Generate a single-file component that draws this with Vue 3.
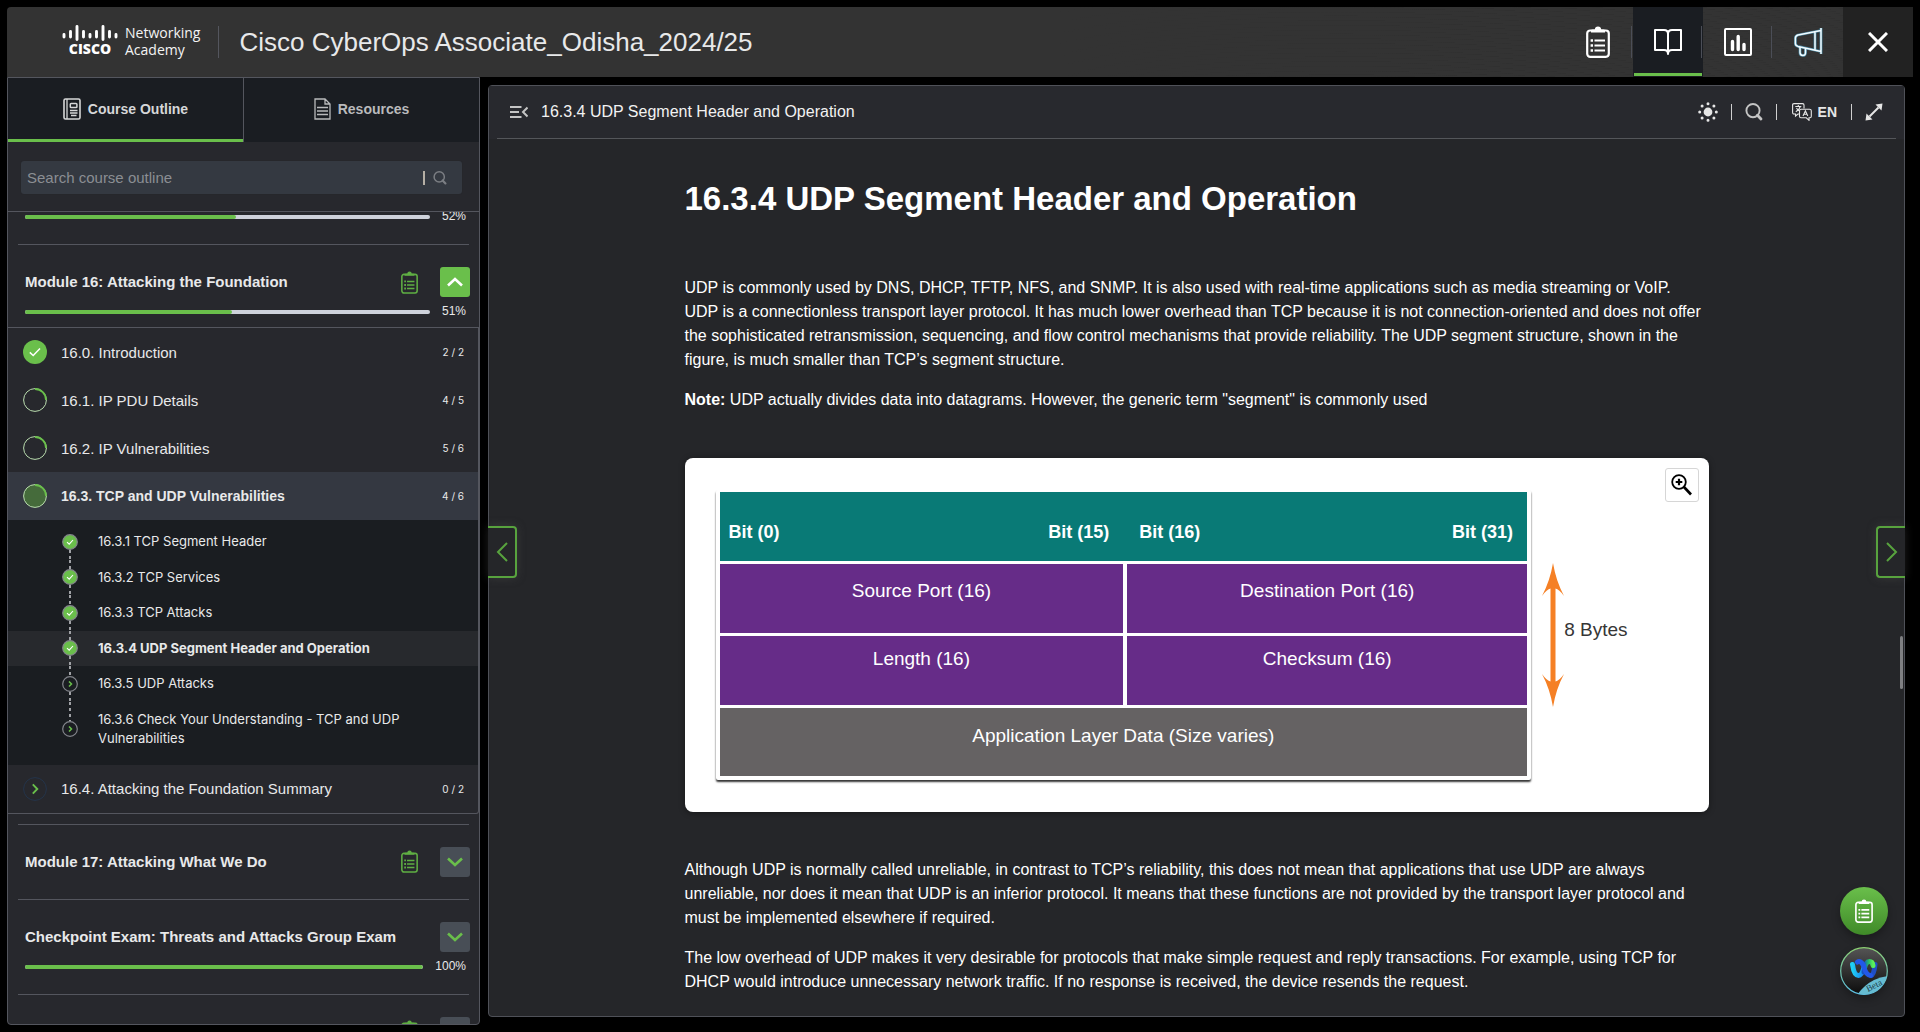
<script setup>
import { ref } from 'vue'

const query = ref('')

const sections = [
  { title: '16.0. Introduction', count: '2 / 2', state: 'done' },
  { title: '16.1. IP PDU Details', count: '4 / 5', state: 'partial' },
  { title: '16.2. IP Vulnerabilities', count: '5 / 6', state: 'partial' },
  {
    title: '16.3. TCP and UDP Vulnerabilities',
    count: '4 / 6',
    state: 'partial',
    open: true,
    topics: [
      { title: '16.3.1 TCP Segment Header', done: true },
      { title: '16.3.2 TCP Services', done: true },
      { title: '16.3.3 TCP Attacks', done: true },
      { title: '16.3.4 UDP Segment Header and Operation', done: true, current: true },
      { title: '16.3.5 UDP Attacks', done: false },
      { title: '16.3.6 Check Your Understanding - TCP and UDP Vulnerabilities', done: false },
    ],
  },
  { title: '16.4. Attacking the Foundation Summary', count: '0 / 2', state: 'new' },
]

const modules = [
  { id: 'm15', percent: 52 },
  { id: 'm16', title: 'Module 16: Attacking the Foundation', exam: true, percent: 51, sections },
  { id: 'm17', title: 'Module 17: Attacking What We Do', exam: true },
  { id: 'cp', title: 'Checkpoint Exam: Threats and Attacks Group Exam', percent: 100 },
  { id: 'm18', title: '', exam: true },
]
</script>

<template>
  <div class="app">
    <svg class="defs" width="0" height="0" aria-hidden="true">
      <symbol id="i-clipboard" viewBox="0 0 24 32">
        <rect x="1.200" y="4.5" width="21.600" height="26.300" rx="3" fill="none" stroke="currentColor" stroke-width="2.200" />
        <path d="M5 6.5V4.5Q5 3.5 6.5 3.5H8.8Q9 .5 12 .5T15.2 3.5H17.5Q19 3.5 19 4.5V6.5Z" fill="currentColor" />
        <path d="M8.5 14.5H19M8.5 19.5H19M8.5 24.5H19" stroke="currentColor" stroke-width="2.200" />
        <path d="M4.6 14.5h2.4M4.6 19.5h2.4M4.6 24.5h2.4" stroke="currentColor" stroke-width="2.6" />
      </symbol>
      <symbol id="i-search" viewBox="0 0 18 18">
        <circle cx="8" cy="7.6" r="6.6" fill="none" stroke="currentColor" stroke-width="1.9" />
        <path d="M12.4 12.2L16 16" stroke="currentColor" stroke-width="2.8" stroke-linecap="round" />
      </symbol>
    </svg>

    <header class="topbar">
      <a class="logo" href="#" aria-label="Cisco Networking Academy">
        <span class="logo-mark">
          <svg width="56" height="16" viewBox="0 0 56 16" aria-hidden="true">
            <path d="M2 9.500v2.500M8.500 6.500v5.500M15 1.500v13M21.500 6.500v5.500M28 9.500v2.500M34.500 6.500v5.500M41 1.500v13M47.500 6.500v5.500M54 9.500v2.500"
              stroke="#fff" stroke-width="2.900" stroke-linecap="round" />
          </svg>
          <span class="logo-name">CISCO</span>
        </span>
        <span class="logo-text">Networking<br>Academy</span>
      </a>
      <span class="vline"></span>
      <div class="course">Cisco CyberOps Associate_Odisha_2024/25</div>
      <nav class="tools">
        <button type="button" aria-label="Assignments">
          <svg width="24" height="32"><use href="#i-clipboard" /></svg>
        </button>
        <button type="button" class="active" aria-label="Course content">
          <svg width="28" height="26" viewBox="0 0 28 26" fill="none" stroke="currentColor" stroke-width="2" stroke-linejoin="round">
            <path d="M1 1H10Q14 1 14 5Q14 1 18 1H27V21H18Q14 21 14 25Q14 21 10 21H1ZM14 5V24" />
          </svg>
        </button>
        <button type="button" aria-label="Grades">
          <svg width="28" height="28" viewBox="0 0 28 28" fill="none" stroke="currentColor" stroke-width="2">
            <rect x="1" y="1" width="26" height="26" rx="1" />
            <path d="M8.500 13.500V21.500M14.200 8.500V21.500M20 16.500V21.500" stroke-width="3.400" stroke-linecap="round" />
          </svg>
        </button>
        <button type="button" class="plain" aria-label="Announcements">
          <svg width="29" height="30" viewBox="0 0 29 30" fill="none" stroke-linejoin="round">
            <g stroke="#4a89a3" stroke-width="2.800">
              <path d="M27 1V27M27 3.500L4 8Q1.400 8.800 1.400 11V16.500Q1.400 18.700 4 19.400L27 24.500M21 4.700V23.200" />
              <path d="M6 20V25.500Q6 28.400 8.800 28.400T11.500 25.500V21" />
            </g>
            <g stroke="#f2fbff" stroke-width="1.500">
              <path d="M27 1V27M27 3.500L4 8Q1.400 8.800 1.400 11V16.500Q1.400 18.700 4 19.400L27 24.500M21 4.700V23.200" />
              <path d="M6 20V25.500Q6 28.400 8.800 28.400T11.500 25.500V21" />
            </g>
          </svg>
        </button>
        <button type="button" class="close" aria-label="Close">
          <svg width="20" height="20" viewBox="0 0 20 20" stroke="currentColor" stroke-width="3">
            <path d="M1 1L19 19M19 1L1 19" />
          </svg>
        </button>
      </nav>
    </header>

    <div class="body">
      <aside class="sidebar">
        <div class="tabs" role="tablist">
          <button type="button" role="tab" aria-selected="true" class="tab selected">
            <svg width="18" height="22" viewBox="0 0 18 22" fill="none" stroke="currentColor" stroke-width="1.300">
              <rect x="1" y="1" width="16" height="20" rx="1.500" stroke-width="1.600" />
              <path d="M4 1V21M7 12.500H14.500M7 15H14.500M8 17.500H13.500" />
              <rect x="7.300" y="5.500" width="6.600" height="4" rx=".8" stroke-width="1.500" />
            </svg>
            Course Outline
          </button>
          <button type="button" role="tab" aria-selected="false" class="tab">
            <svg width="17" height="22" viewBox="0 0 17 22" fill="none" stroke="currentColor" stroke-width="1.300">
              <path d="M1 1H11L16 6V21H1ZM11 1V6H16M3 9.500H14M3 13H14M3 16.500H14" />
            </svg>
            Resources
          </button>
        </div>

        <form class="search" @submit.prevent>
          <input v-model="query" type="text" placeholder="Search course outline" aria-label="Search course outline">
          <span class="search-bar"></span>
          <button type="submit" aria-label="Search"><svg width="14" height="14"><use href="#i-search" /></svg></button>
        </form>

        <div class="outline">
          <section v-for="(m, i) in modules" :key="m.id" class="module">
            <hr v-if="i > 0">
            <div v-if="m.title !== undefined" class="module-head">
              <h2>{{ m.title }}</h2>
              <svg v-if="m.exam" class="exam" width="17" height="23"><use href="#i-clipboard" /></svg>
              <button type="button" class="toggle" :class="{ open: m.sections }" :aria-expanded="!!m.sections" aria-label="Toggle module">
                <svg width="16" height="10" viewBox="0 0 16 10" fill="none" stroke="currentColor" stroke-width="2.600">
                  <path :d="m.sections ? 'M1 8.500L8 2L15 8.500' : 'M1 1.500L8 8L15 1.500'" />
                </svg>
              </button>
            </div>
            <div v-if="m.percent" class="progress">
              <span class="track"><span class="fill" :style="{ width: m.percent + '%' }"></span></span>
              <span class="percent">{{ m.percent }}%</span>
            </div>

            <div v-if="m.sections" class="sections">
              <div v-for="s in m.sections" :key="s.title">
                <a href="#" class="section" :class="{ open: s.open }">
                  <svg class="state" width="24" height="24" viewBox="0 0 24 24" fill="none">
                    <template v-if="s.state === 'done'">
                      <circle cx="12" cy="12" r="12" fill="#6abf4b" />
                      <path d="M6.800 12.400L10.200 15.500L17 8.500" stroke="#fff" stroke-width="1.500" />
                    </template>
                    <template v-else-if="s.state === 'partial'">
                      <circle cx="12" cy="12" r="11.400" :fill="s.open ? '#456b3b' : 'none'" stroke="#b9dcae" stroke-width="1" />
                      <path d="M12 1A11 11 0 0 1 23 12" stroke="#6abf4b" stroke-width="1.800" />
                    </template>
                    <template v-else>
                      <circle cx="12" cy="12" r="11.400" stroke="#24344a" />
                      <path d="M9.800 7.300L14.300 12L9.800 16.700" stroke="#6abf4b" stroke-width="1.900" />
                    </template>
                  </svg>
                  <span class="section-title">{{ s.title }}</span>
                  <span class="count">{{ s.count }}</span>
                </a>
                <ul v-if="s.topics" class="topics">
                  <li v-for="t in s.topics" :key="t.title" :class="{ current: t.current }">
                    <svg width="16" height="16" viewBox="0 0 16 16" fill="none">
                      <circle cx="8" cy="8" r="7.300" :fill="t.done ? '#6abf4b' : 'none'" stroke="#83858b" stroke-width="1.200" />
                      <path v-if="t.done" d="M5 8.200L7.200 10.200L11 6" stroke="#fff" stroke-width="1.100" />
                      <path v-else d="M7 5.500L9.500 8L7 10.500" stroke="#6abf4b" stroke-width="1.500" />
                    </svg>
                    <a href="#">{{ t.title }}</a>
                  </li>
                </ul>
              </div>
            </div>
          </section>
        </div>
      </aside>

      <main class="panel">
        <div class="panel-head">
          <button type="button" class="icon collapse" aria-label="Collapse outline">
            <svg width="18" height="12" viewBox="0 0 18 12" fill="none" stroke="currentColor" stroke-width="2">
              <path d="M0 1H11.500M0 6H9M0 11H11.500M17.500 1.500L13 6L17.500 10.500" />
            </svg>
          </button>
          <span class="panel-title">16.3.4 UDP Segment Header and Operation</span>
          <button type="button" class="icon" aria-label="Theme">
            <svg width="20" height="20" viewBox="0 0 20 20" fill="currentColor">
              <circle cx="10" cy="10" r="4.400" />
              <path d="M10 1.700v.01M10 18.300v.01M1.700 10h.01M18.300 10h.01M4.100 4.100h.01M15.900 4.100h.01M4.100 15.900h.01M15.900 15.900h.01"
                stroke="currentColor" stroke-width="3" stroke-linecap="round" />
            </svg>
          </button>
          <span class="bar"></span>
          <button type="button" class="icon dim" aria-label="Search page"><svg width="18" height="18"><use href="#i-search" /></svg></button>
          <span class="bar"></span>
          <button type="button" class="icon lang" aria-label="Language: English">
            <svg width="20" height="18" viewBox="0 0 20 18" fill="none" stroke="currentColor" stroke-width="1.100">
              <path d="M7.500 11H6L3.500 13V11H2Q.6 11 .6 9.600V2Q.6.600 2 .6H10.500Q12 .6 12 2V5.500" />
              <path d="M9 6.200H17.500Q19.300 6.200 19.300 7.800V13.300Q19.300 14.800 18 14.800H17V17.300L14.300 14.800H9Q7.500 14.800 7.500 13.300V7.800Q7.500 6.200 9 6.200Z" />
              <path d="M3.300 3.500H9.300M6.300 2V3.500M8.300 3.500Q7.300 7 3.800 8.700M4.500 5Q5.500 7 7 7.800M11 13L13.400 7.900L15.800 13M11.900 11.300H15" />
            </svg>
            EN
          </button>
          <span class="bar"></span>
          <button type="button" class="icon" aria-label="Full screen">
            <svg width="18" height="18" viewBox="0 0 18 18" fill="currentColor">
              <path d="M17.500.5L16.500 7.500L10.500 1.500ZM.5 17.500L1.500 10.500L7.500 16.500Z" />
              <path d="M13.500 4.500L4.500 13.500" stroke="currentColor" stroke-width="2" />
            </svg>
          </button>
        </div>

        <div class="page">
          <article>
            <h1>16.3.4 UDP Segment Header and Operation</h1>
            <p>UDP is commonly used by DNS, DHCP, TFTP, NFS, and SNMP. It is also used with real-time applications such as media streaming or VoIP. UDP is a connectionless transport layer protocol. It has much lower overhead than TCP because it is not connection-oriented and does not offer the sophisticated retransmission, sequencing, and flow control mechanisms that provide reliability. The UDP segment structure, shown in the figure, is much smaller than TCP’s segment structure.</p>
            <p><strong>Note:</strong> UDP actually divides data into datagrams. However, the generic term "segment" is commonly used</p>

            <figure>
              <div class="segment">
                <table>
                  <thead>
                    <tr>
                      <th class="left">Bit (0)</th>
                      <th class="right">Bit (15)</th>
                      <th class="mid">Bit (16)</th>
                      <th class="right">Bit (31)</th>
                    </tr>
                  </thead>
                  <tbody>
                    <tr class="ports">
                      <td colspan="2">Source Port (16)</td>
                      <td colspan="2">Destination Port (16)</td>
                    </tr>
                    <tr class="sizes">
                      <td colspan="2">Length (16)</td>
                      <td colspan="2">Checksum (16)</td>
                    </tr>
                    <tr class="payload">
                      <td colspan="4">Application Layer Data (Size varies)</td>
                    </tr>
                  </tbody>
                </table>
              </div>
              <svg class="span-arrow" width="22" height="144" viewBox="0 0 22 144" fill="#f58025">
                <path d="M11 0Q14 18 22 33Q17 26 13.500 25.500V118.500Q17 118 22 111Q14 126 11 144Q8 126 0 111Q5 118 8.500 118.500V25.500Q5 26 0 33Q8 18 11 0Z" />
              </svg>
              <figcaption>8 Bytes</figcaption>
              <button type="button" class="magnify" aria-label="Enlarge figure">
                <svg width="22" height="22" viewBox="0 0 22 22" fill="none" stroke="#000">
                  <circle cx="8" cy="8" r="6.800" stroke-width="1.800" />
                  <path d="M8 4.700V11.300M4.700 8H11.300" stroke-width="2.200" />
                  <path d="M12.500 12.500L20 20.500" stroke-width="2.600" />
                </svg>
              </button>
            </figure>

            <p>Although UDP is normally called unreliable, in contrast to TCP’s reliability, this does not mean that applications that use UDP are always unreliable, nor does it mean that UDP is an inferior protocol. It means that these functions are not provided by the transport layer protocol and must be implemented elsewhere if required.</p>
            <p>The low overhead of UDP makes it very desirable for protocols that make simple request and reply transactions. For example, using TCP for DHCP would introduce unnecessary network traffic. If no response is received, the device resends the request.</p>
          </article>
        </div>

        <button type="button" class="step prev" aria-label="Previous page">
          <svg width="12" height="20" viewBox="0 0 12 20"><path d="M11 1L2 10L11 19" /></svg>
        </button>
        <button type="button" class="step next" aria-label="Next page">
          <svg width="12" height="20" viewBox="0 0 12 20"><path d="M1 1L10 10L1 19" /></svg>
        </button>
        <span class="thumb"></span>

        <div class="floaters">
          <button type="button" class="float-exam" aria-label="Assignments">
            <svg width="18" height="24"><use href="#i-clipboard" /></svg>
          </button>
          <button type="button" class="float-webex" aria-label="Webex">
            <svg width="48" height="48" viewBox="0 0 48 48" fill="none">
              <defs>
                <linearGradient id="wx-bg" x1="0" y1="0" x2="0" y2="1"><stop offset="0" stop-color="#555" /><stop offset="1" stop-color="#0c0c0c" /></linearGradient>
                <linearGradient id="wx-ring" x1="0" y1="0" x2="0" y2="1"><stop offset="0" stop-color="#8ccf72" /><stop offset="1" stop-color="#5bbfe4" /></linearGradient>
                <linearGradient id="wx-l" x1="0" y1="0" x2="1" y2="0"><stop offset="0" stop-color="#1fd0f5" /><stop offset="1" stop-color="#1a7cf0" /></linearGradient>
                <linearGradient id="wx-r" x1="0" y1="0" x2="1" y2="0"><stop offset="0" stop-color="#1455c0" /><stop offset=".5" stop-color="#25b86a" /><stop offset="1" stop-color="#5cf05a" /></linearGradient>
                <clipPath id="wx-clip"><circle cx="24" cy="24" r="23.500" /></clipPath>
              </defs>
              <circle cx="24" cy="24" r="23.300" fill="url(#wx-bg)" stroke="url(#wx-ring)" stroke-width="1.200" />
              <path d="M12.500 17.500Q14 28.500 18.500 28.500Q22 28.500 24 20" stroke="url(#wx-l)" stroke-width="5" stroke-linecap="round" />
              <path d="M31 28.500Q34 28 35 17.500" stroke="#1f4fc4" stroke-width="5" stroke-linecap="round" />
              <path d="M24 25Q25 14.500 29.500 14.500Q32.500 14.500 33 18.500" stroke="url(#wx-r)" stroke-width="5" stroke-linecap="round" />
              <path d="M17.500 15Q20.500 13 23.500 18.500Q26 28.500 30.500 28.500" stroke="#2258e8" stroke-width="5" stroke-linecap="round" />
              <path clip-path="url(#wx-clip)" d="M17 48Q24 38 34 33Q40 30 48 29V48Z" fill="#66bcd2" />
              <text x="28" y="45" transform="rotate(-27 28 45)" font-family="Liberation Serif, serif" font-size="9" fill="#1d3c48">Beta</text>
            </svg>
          </button>
        </div>
      </main>
    </div>
  </div>
</template>

<style>
body {
  background: #000;
}
</style>

<style scoped>
* {
  box-sizing: border-box;
}

.app {
  display: flex;
  flex-direction: column;
  height: 100vh;
  padding: 7px;
  overflow: hidden;
  background: #000;
  color: #e8e9ea;
  font-family: "Liberation Sans", Arial, sans-serif;
  font-size: 16px;
}

.defs {
  position: absolute;
}

button {
  display: flex;
  align-items: center;
  justify-content: center;
  padding: 0;
  border: 0;
  background: none;
  color: inherit;
  font: inherit;
  cursor: pointer;
}

a {
  color: inherit;
  text-decoration: none;
}

svg {
  display: block;
  flex: none;
}

h1,
h2,
p,
figure,
ul {
  margin: 0;
  padding: 0;
}

/* top bar */
.topbar {
  display: flex;
  flex: none;
  align-items: center;
  height: 70px;
  border-radius: 4px 4px 0 0;
  background:
    linear-gradient(90deg, #333 55%, transparent 80%),
    repeating-radial-gradient(ellipse at 70% 260%, #333 0 9px, #303030 11px 12px);
}

.logo {
  display: flex;
  align-items: center;
  gap: 7px;
  margin-left: 55px;
  padding-bottom: 2px;
}

.logo-mark {
  display: flex;
  flex-direction: column;
  align-items: center;
}

.logo-name {
  font-family: "Open Sans", sans-serif;
  font-size: 14px;
  font-weight: 800;
  line-height: 16px;
  color: #fff;
}

.logo-text {
  font-family: "Open Sans", sans-serif;
  font-size: 14px;
  line-height: 17px;
  color: #f4f4f4;
}

.vline {
  width: 1px;
  height: 32px;
  margin: 0 20px 0 18px;
  background: #54565e;
}

.course {
  flex: 1;
  font-size: 26px;
  line-height: 32px;
  white-space: nowrap;
}

.tools {
  display: flex;
  align-self: stretch;
  color: #fff;
}

.tools button {
  position: relative;
  width: 70px;
}

.tools button:not(.plain):not(.close)::after {
  content: "";
  position: absolute;
  top: 19px;
  right: 1px;
  width: 1px;
  height: 32px;
  background: #4b4e57;
}

.tools .active {
  background: #1a1d22;
}

.tools .active::before {
  content: "";
  position: absolute;
  right: 1px;
  bottom: 1px;
  left: 1px;
  height: 3px;
  background: #6abf4b;
}

.tools .close {
  background: #222;
}

/* columns */
.body {
  display: flex;
  flex: 1;
  gap: 8px;
  min-height: 0;
}

.sidebar {
  display: flex;
  flex: 0 0 473px;
  flex-direction: column;
  border: 1px solid #54565e;
  border-radius: 0 0 4px 4px;
  background: #27282d;
}

.tabs {
  display: flex;
  flex: none;
  height: 64px;
}

.tab {
  flex: 1;
  gap: 7px;
  padding-bottom: 2px;
  background: #1a1d22;
  color: #b9babc;
  font-size: 14px;
  font-weight: bold;
}

.tab.selected {
  border-right: 1px solid #54565e;
  box-shadow: inset 0 -3px #6abf4b;
  color: #d6d7d8;
}

.search {
  display: flex;
  flex: none;
  align-items: center;
  height: 33px;
  margin: 19px 17px 17px 13px;
  padding: 0 15px 0 6px;
  border-radius: 3px;
  background: #343941;
  box-shadow: 0 0 1px #202125;
}

.search input {
  flex: 1;
  min-width: 0;
  padding: 0;
  border: 0;
  outline: 0;
  background: none;
  color: #e8e9ea;
  font: 15px/20px "Liberation Sans", Arial, sans-serif;
}

.search input::placeholder {
  color: #8b8e93;
  opacity: 1;
}

.search-bar {
  width: 2px;
  height: 14px;
  margin-right: 8px;
  background: #b5afa5;
}

.search button {
  color: #7b7e83;
}

.outline {
  flex: 1;
  min-height: 0;
  overflow: hidden;
  border-top: 1px solid #54565e;
}

.outline hr {
  height: 1px;
  margin: 22px 10px;
  border: 0;
  background: #54565e;
}

.module-head {
  display: flex;
  align-items: center;
  height: 30px;
  padding: 0 9px 0 17px;
}

h2 {
  flex: 1;
  font-size: 15px;
  font-weight: bold;
  line-height: 20px;
  white-space: nowrap;
}

.exam {
  margin-right: 22px;
  color: #5fae43;
}

.toggle {
  width: 30px;
  height: 30px;
  border-radius: 3px;
  background: #484e56;
  color: #6abf4b;
}

.toggle.open {
  background: #6abf4b;
  color: #fff;
}

.progress {
  display: flex;
  align-items: center;
  gap: 12px;
  height: 10px;
  padding: 0 13px 0 17px;
}

.module-head + .progress {
  margin-top: 10px;
}

.track {
  flex: 1;
  height: 4px;
  border-radius: 2px;
  overflow: hidden;
  background: #ced2db;
}

.fill {
  display: block;
  height: 4px;
  border-radius: 0 2px 2px 0;
  background: #6abf4b;
}

.percent {
  padding-bottom: 2px;
  font-size: 12px;
  line-height: 12px;
}

.sections {
  margin: 10px 0 -12px;
  border: 1px solid #54565e;
  border-left: 0;
  border-radius: 0 0 3px 0;
}

.section {
  display: flex;
  align-items: center;
  gap: 14px;
  height: 48px;
  padding: 0 14px 0 15px;
  font-size: 15px;
}

.section.open {
  background: #343841;
  font-size: 14px;
  font-weight: bold;
}

.section-title {
  flex: 1;
}

.count {
  font-family: Inter, sans-serif;
  font-size: 10px;
  font-weight: normal;
}

.topics {
  padding: 4px 0 8px;
  background: #1a1d21;
  font-family: Inter, sans-serif;
  font-size: 13px;
  line-height: 1.5;
  list-style: none;
}

.topics li {
  position: relative;
  display: flex;
  align-items: center;
  gap: 20px;
  padding: 8px 60px 8px 54px;
}

.topics .current {
  background: #27292d;
  font-weight: bold;
}

.topics li:not(:first-child)::before,
.topics li:not(:last-child)::after {
  content: "";
  position: absolute;
  left: 61px;
  width: 2px;
  background: repeating-linear-gradient(#9fa1a5 0 3px, transparent 3px 6px);
}

.topics li:not(:first-child)::before {
  top: 0;
  bottom: calc(50% + 8px);
}

.topics li:not(:last-child)::after {
  top: calc(50% + 8px);
  bottom: 0;
}

/* content panel */
.panel {
  position: relative;
  display: flex;
  flex: 1;
  flex-direction: column;
  min-width: 0;
  margin: 8px 8px 8px 0;
  border: 1px solid #4f5158;
  border-radius: 4px;
  background: #252629;
}

.panel-head {
  display: flex;
  flex: none;
  align-items: center;
  gap: 13px;
  height: 53px;
  margin: 0 8px;
  padding: 0 13px;
  border-bottom: 1px solid #54565a;
  background: #28292e;
  box-shadow: -8px 0 #28292e, 8px 0 #28292e;
}

.panel-title {
  flex: 1;
  color: #f2f2f2;
  line-height: 20px;
}

.icon {
  color: #e6e6e6;
}

.collapse,
.dim {
  color: #c4c4c4;
}

.lang {
  gap: 6px;
  padding: 0 1px 0 2px;
  font-size: 14px;
  font-weight: bold;
}

.bar {
  width: 1px;
  height: 16px;
  background: #cfcfcf;
}

.page {
  flex: 1;
  min-height: 0;
  overflow: hidden;
}

article {
  max-width: 1024px;
  margin: 0 auto;
  color: #fff;
}

h1 {
  margin: 40px 0 57px;
  font-size: 33px;
  line-height: 40px;
}

p {
  line-height: 24px;
}

p + p {
  margin-top: 16px;
}

figure {
  position: relative;
  display: flex;
  align-items: center;
  margin: 46px 0;
  padding: 32px 81px 32px 31px;
  border-radius: 8px;
  background: #fff;
  box-shadow: 0 1px 6px rgba(0, 0, 0, .4);
}

.segment {
  flex: 1;
  padding: 2px 4px 4px;
  border-radius: 2px;
  background: #fff;
  box-shadow: 0 2px 2px rgba(0, 0, 0, .8);
}

table {
  width: 100%;
  border-spacing: 0;
  table-layout: fixed;
  color: #fff;
  font-size: 18px;
  line-height: 24px;
}

th,
td {
  height: 72px;
  border-bottom: 3px solid #fff;
  vertical-align: top;
  text-align: center;
}

th {
  padding: 28px 0 0;
  background: #097a76;
}

th.left {
  padding-left: 9px;
  text-align: left;
}

th.mid {
  padding-left: 16px;
  text-align: left;
}

th.right {
  padding-right: 14px;
  text-align: right;
}

td {
  background: #662c88;
  font-size: 19px;
}

td + td {
  border-left: 4px solid #fff;
}

.ports td {
  padding: 15px 0 0;
}

.sizes td {
  padding: 11px 0 0;
}

.payload td {
  height: 68px;
  padding: 16px 0 0;
  border-bottom: 0;
  background: #656263;
}

.span-arrow {
  margin: 0 0 0 11px;
}

figcaption {
  padding-bottom: 10px;
  color: #363636;
  font-size: 19px;
  white-space: nowrap;
}

.magnify {
  position: absolute;
  top: 10px;
  right: 10px;
  width: 34px;
  height: 34px;
  border: 1px solid #d6d6d6;
  border-radius: 3px;
  background: #fff;
}

.step {
  position: absolute;
  top: 440px;
  width: 29px;
  height: 52px;
  border: 2px solid #58a33e;
  background: #252629;
  box-shadow: 0 0 10px rgba(90, 90, 90, .35);
}

.step path {
  fill: none;
  stroke: #58a33e;
  stroke-width: 2;
}

.prev {
  left: -1px;
  border-left: 0;
  border-radius: 0 4px 4px 0;
}

.next {
  right: -1px;
  border-right: 0;
  border-radius: 4px 0 0 4px;
}

.thumb {
  position: absolute;
  top: 550px;
  right: 1px;
  width: 3px;
  height: 53px;
  border-radius: 2px;
  background: #7f8083;
}

.floaters {
  position: absolute;
  right: 16px;
  bottom: 21px;
  display: flex;
  flex-direction: column;
  gap: 12px;
}

.floaters button {
  width: 48px;
  height: 48px;
  border-radius: 50%;
  box-shadow: 0 4px 8px rgba(0, 0, 0, .3);
}

.float-exam {
  background: linear-gradient(#6abf4b, #3f8a28);
  color: #fff;
}
</style>
